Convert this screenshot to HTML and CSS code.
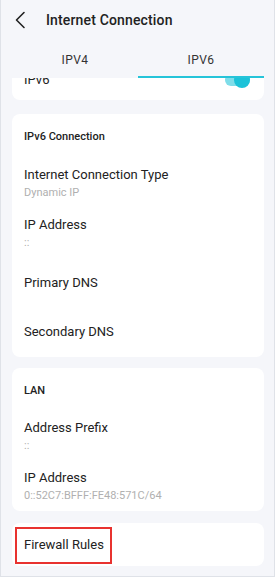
FILE: index.html
```html
<!DOCTYPE html>
<html>
<head>
<meta charset="utf-8">
<link rel="stylesheet" href="styles.css">
</head>
<body>
<div class="phone">
  <header class="topbar">
    <svg class="back" width="12" height="18" viewBox="0 0 12 18"><path d="M10 1.5 L2.5 9 L10 16.5" fill="none" stroke="#222" stroke-width="1.6" stroke-linecap="round" stroke-linejoin="round"/></svg>
    <h1 class="title">Internet Connection</h1>
  </header>
  <nav class="tabs">
    <div class="tab">IPV4</div>
    <div class="tab active">IPV6</div>
  </nav>
  <main class="scroll">
    <section class="card card-toggle">
      <span class="label">IPv6</span>
      <span class="switch"><span class="knob"></span></span>
    </section>
    <section class="card card-conn">
      <div class="card-title">IPv6 Connection</div>
      <div class="item"><div class="label">Internet Connection Type</div><div class="value">Dynamic IP</div></div>
      <div class="item"><div class="label">IP Address</div><div class="value">::</div></div>
      <div class="item"><div class="label">Primary DNS</div></div>
      <div class="item"><div class="label">Secondary DNS</div></div>
    </section>
    <section class="card card-lan">
      <div class="card-title">LAN</div>
      <div class="item"><div class="label">Address Prefix</div><div class="value">::</div></div>
      <div class="item"><div class="label">IP Address</div><div class="value">0::52C7:BFFF:FE48:571C/64</div></div>
    </section>
    <section class="card card-fw">
      <span class="label">Firewall Rules</span>
      <span class="highlight"></span>
    </section>
  </main>
</div>
</body>
</html>
```
FILE: styles.css
```css
* { box-sizing: border-box; margin: 0; padding: 0; }
html, body { background: #ffffff; }
body {
  margin: 0;
  font-family: Roboto, "Noto Sans", "Liberation Sans", sans-serif;
  color: #222;
}
.phone {
  width: 275px;
  height: 577px;
  background: #f5f6fa;
  border: 1px solid #dfe2e8;
  border-top: none;
  display: flex;
  flex-direction: column;
  overflow: hidden;
}
.topbar {
  height: 40px;
  display: flex;
  align-items: center;
  padding-left: 13px;
}
.back { display: block; }
.title {
  font-size: 14px;
  font-weight: 500;
  color: #222;
  margin-left: 20px;
  line-height: 18px;
  letter-spacing: 0.15px;
}
.tabs {
  height: 38px;
  margin: 0 10px 0 11px;
  display: grid;
  grid-template-columns: 1fr 1fr;
  position: relative;
  z-index: 1;
  background: #f5f6fa;
}
.tab {
  display: flex;
  align-items: center;
  justify-content: center;
  font-size: 12px;
  color: #333;
  letter-spacing: 0.4px;
  padding-top: 3px;
  border-bottom: 2px solid transparent;
}
.tab.active {
  border-bottom-color: #26c4d9;
}
.scroll {
  flex: 1;
  overflow: hidden;
  padding: 0 10px 0 11px;
}
.card {
  background: #fff;
  border-radius: 8px;
  position: relative;
}
.card-toggle {
  height: 40px;
  margin-top: -18px;
  display: flex;
  align-items: center;
  justify-content: space-between;
  padding: 0 14px 0 12px;
}
.label {
  font-size: 13px;
  line-height: 16px;
  color: #222;
}
.value {
  font-size: 11px;
  line-height: 14px;
  color: #b0b0b0;
  margin-top: 3px;
}
.switch {
  width: 25px;
  height: 12px;
  border-radius: 6px;
  background: #7fdde9;
  position: relative;
  margin-top: -1px;
}
.knob {
  position: absolute;
  right: 0;
  top: -2px;
  width: 16px;
  height: 16px;
  border-radius: 50%;
  background: #1cc2d8;
}
.card-conn { margin-top: 14px; }
.card-lan { margin-top: 11px; }
.card-fw {
  margin-top: 12px;
  height: 43px;
  display: flex;
  align-items: center;
  padding-left: 12px;
}
.card-title {
  height: 45px;
  display: flex;
  align-items: center;
  padding: 0 12px;
  font-size: 11px;
  font-weight: 500;
  color: #222;
}
.card-lan .card-title { height: 44px; }
.item {
  height: 49.5px;
  display: flex;
  flex-direction: column;
  justify-content: center;
  padding: 0 12px;
}
.highlight {
  position: absolute;
  left: 3px;
  top: 4px;
  width: 97px;
  height: 37px;
  border: 2px solid #e8322f;
}
```
